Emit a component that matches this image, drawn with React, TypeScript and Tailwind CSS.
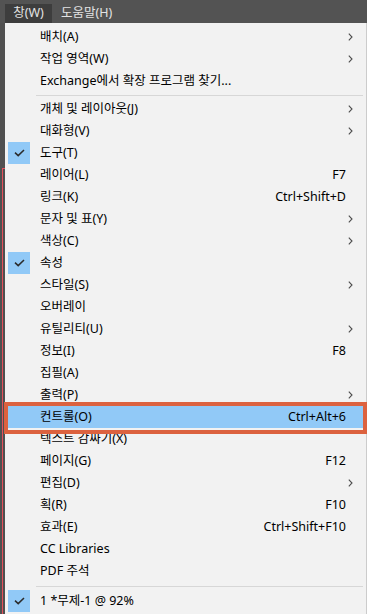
import React from "react";

type Item = {
  label: string;
  shortcut?: string;
  arrow?: boolean;
  checked?: boolean;
  highlighted?: boolean;
};

const group1: Item[] = [
  { label: "배치(A)", arrow: true },
  { label: "작업 영역(W)", arrow: true },
  { label: "Exchange에서 확장 프로그램 찾기..." },
];

const group2: Item[] = [
  { label: "개체 및 레이아웃(J)", arrow: true },
  { label: "대화형(V)", arrow: true },
  { label: "도구(T)", checked: true },
  { label: "레이어(L)", shortcut: "F7" },
  { label: "링크(K)", shortcut: "Ctrl+Shift+D" },
  { label: "문자 및 표(Y)", arrow: true },
  { label: "색상(C)", arrow: true },
  { label: "속성", checked: true },
  { label: "스타일(S)", arrow: true },
  { label: "오버레이" },
  { label: "유틸리티(U)", arrow: true },
  { label: "정보(I)", shortcut: "F8" },
  { label: "집필(A)" },
  { label: "출력(P)", arrow: true },
  { label: "컨트롤(O)", shortcut: "Ctrl+Alt+6", highlighted: true },
  { label: "텍스트 감싸기(X)" },
  { label: "페이지(G)", shortcut: "F12" },
  { label: "편집(D)", arrow: true },
  { label: "획(R)", shortcut: "F10" },
  { label: "효과(E)", shortcut: "Ctrl+Shift+F10" },
  { label: "CC Libraries" },
  { label: "PDF 주석" },
];

const group3: Item[] = [{ label: "1 *무제-1 @ 92%", checked: true }];

function Check() {
  return (
    <svg width="11" height="8" viewBox="0 0 11 8" fill="none">
      <path d="M1 3.6 L4.2 6.6 L10 1" stroke="#2b2b2b" strokeWidth="1.5" />
    </svg>
  );
}

function Chevron() {
  return (
    <svg width="5" height="8" viewBox="0 0 5 8" fill="none">
      <path d="M0.8 0.6 L4 4 L0.8 7.4" stroke="#4d4d4d" strokeWidth="1.1" />
    </svg>
  );
}

function Row({ item }: { item: Item }) {
  return (
    <div className="relative h-[22px]">
      {item.highlighted && (
        <div className="absolute -left-[1px] -right-[1px] -top-[4px] -bottom-[6px] border-[4px] border-[#dc623f] pointer-events-none z-10" />
      )}
      <div
        className={
          item.highlighted
            ? "mx-[3px] h-[22px] flex items-center bg-[#91c9f7]"
            : "mx-[3px] h-[22px] flex items-center"
        }
      >
        <div className="w-[32px] h-[22px] flex items-center shrink-0">
          {item.checked && (
            <div className="w-[22px] h-[22px] bg-[#91c9f7] flex items-center justify-center">
              <Check />
            </div>
          )}
        </div>
        <div className="flex-1 text-[12.5px] leading-none pt-[1px] text-black whitespace-nowrap">
          {item.label}
        </div>
        {item.shortcut && (
          <div className="text-[12.5px] leading-none pt-[1px] text-black whitespace-nowrap">
            {item.shortcut}
          </div>
        )}
        <div className="w-[17px] h-[22px] flex items-center pl-[2px] shrink-0">
          {item.arrow && <Chevron />}
        </div>
      </div>
    </div>
  );
}

function Separator({ h }: { h: string }) {
  return (
    <div className={`${h} flex items-center pl-[31px] pr-[3px]`}>
      <div className="h-px w-full bg-[#d7d7d7]" />
    </div>
  );
}

export default function App() {
  return (
    <div className="w-[367px] h-[614px] bg-[#505050] overflow-hidden flex flex-col font-['Noto_Sans','Noto_Sans_CJK_KR',sans-serif]">
      {/* Menu bar */}
      <div className="h-[23px] bg-[#535353] flex items-end pl-[5px] shrink-0">
        <div className="h-[19px] w-[47px] bg-[#3d3d3d] flex items-center justify-center text-[12.5px] leading-none text-[#e3e3e3]">
          창(W)
        </div>
        <div className="h-[19px] ml-[9px] flex items-center text-[12.5px] leading-none text-[#e3e3e3]">
          도움말(H)
        </div>
      </div>
      <div className="flex flex-1">
        {/* left strip */}
        <div className="w-[5px] flex flex-col shrink-0">
          <div className="h-[145px] shrink-0" />
          <div className="flex-1 ml-[2px] border-l border-t border-[#e5505c]" />
        </div>
        {/* dropdown */}
        <div className="flex-1 bg-[#f2f2f2] border-r border-[#cccccc] pt-[3px]">
          {group1.map((it) => (
            <Row key={it.label} item={it} />
          ))}
          <Separator h="h-[6px]" />
          {group2.map((it) => (
            <Row key={it.label} item={it} />
          ))}
          <Separator h="h-[8px]" />
          {group3.map((it) => (
            <Row key={it.label} item={it} />
          ))}
        </div>
      </div>
    </div>
  );
}
